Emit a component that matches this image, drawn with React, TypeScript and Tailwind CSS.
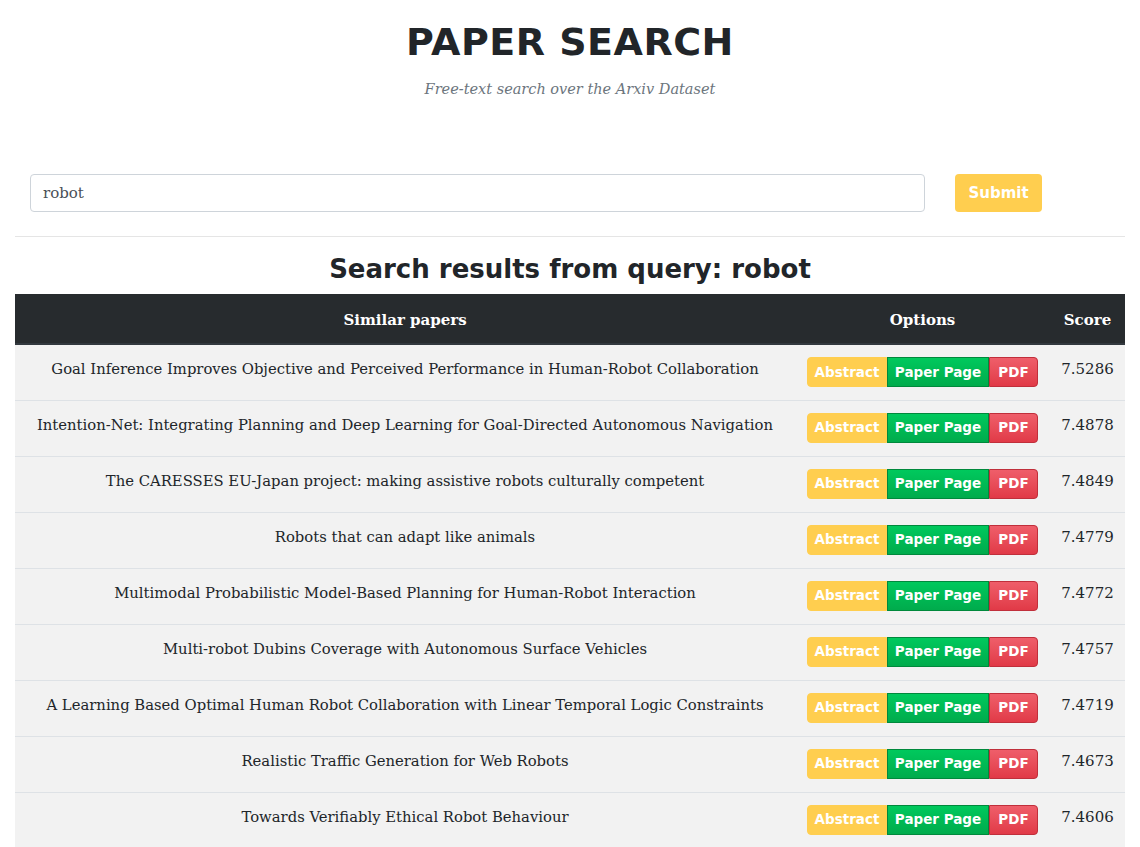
import React from "react";

const papers = [
  { title: "Goal Inference Improves Objective and Perceived Performance in Human-Robot Collaboration", score: "7.5286" },
  { title: "Intention-Net: Integrating Planning and Deep Learning for Goal-Directed Autonomous Navigation", score: "7.4878" },
  { title: "The CARESSES EU-Japan project: making assistive robots culturally competent", score: "7.4849" },
  { title: "Robots that can adapt like animals", score: "7.4779" },
  { title: "Multimodal Probabilistic Model-Based Planning for Human-Robot Interaction", score: "7.4772" },
  { title: "Multi-robot Dubins Coverage with Autonomous Surface Vehicles", score: "7.4757" },
  { title: "A Learning Based Optimal Human Robot Collaboration with Linear Temporal Logic Constraints", score: "7.4719" },
  { title: "Realistic Traffic Generation for Web Robots", score: "7.4673" },
  { title: "Towards Verifiably Ethical Robot Behaviour", score: "7.4606" },
];

const heading = "font-['DejaVu_Sans',sans-serif]";
const body = "font-['DejaVu_Serif',serif]";

const App: React.FC = () => {
  return (
    <div className={`min-h-screen bg-white text-[#212529] ${body}`}>
      <div className="w-[1110px] mx-auto">
        {/* header */}
        <div className="text-center">
          <h1 className={`${heading} font-bold text-[38px] leading-[48px] pt-[18px] text-[#212529] tracking-[0.5px]`}>
            PAPER SEARCH
          </h1>
          <p className="italic text-[14.5px] leading-6 mt-[11px] text-[#6c757d]">
            Free-text search over the Arxiv Dataset
          </p>
        </div>

        {/* search form */}
        <div className="flex items-center px-[15px] mt-[73px]">
          <input
            type="text"
            defaultValue="robot"
            className={`${body} w-[895px] h-[38px] border border-[#ced4da] rounded-[4px] px-[12px] text-[15px] text-[#495057] outline-none`}
          />
          <button className={`${heading} ml-[30px] h-[38px] w-[87px] rounded-[4px] bg-[#ffce4f] text-white font-bold text-[15px]`}>
            Submit
          </button>
        </div>

        <hr className="mt-[24px] border-t border-[#e5e5e5]" />

        {/* results */}
        <h2 className={`${heading} font-bold text-[26px] leading-[34px] text-center mt-[15px] text-[#212529]`}>
          Search results from query: robot
        </h2>

        <table className="w-full mt-[8px] border-collapse table-fixed">
          <thead>
            <tr className="bg-[#272b2e] text-white">
              <th className="w-[780px] h-[50px] pt-[3px] font-bold text-[15px] border-b-2 border-[#32383e]">Similar papers</th>
              <th className="w-[255px] pt-[3px] font-bold text-[15px] border-b-2 border-[#32383e]">Options</th>
              <th className="w-[75px] pt-[3px] font-bold text-[15px] border-b-2 border-[#32383e]">Score</th>
            </tr>
          </thead>
          <tbody>
            {papers.map((paper, index) => (
              <tr key={index} className="bg-[#f2f2f2] border-t border-[#dee2e6] align-top">
                <td className="h-[56px] px-[12px] pt-[12px] text-center text-[14.8px] leading-6 text-[#212529]">
                  {paper.title}
                </td>
                <td className="pt-[12px]">
                  <div className={`${heading} flex justify-center text-white font-bold text-[13.5px]`}>
                    <span className="h-[30px] w-[80px] flex items-center justify-center rounded-l-[4px] bg-[#ffce4f] border border-[#ffce4f]">
                      Abstract
                    </span>
                    <span className="h-[30px] w-[102px] flex items-center justify-center bg-gradient-to-b from-[#00c95d] to-[#00ab4c] border border-[#00893c]">
                      Paper Page
                    </span>
                    <span className="h-[30px] w-[49px] flex items-center justify-center rounded-r-[4px] bg-gradient-to-b from-[#ef5e6a] to-[#e13947] border border-[#c02f3b]">
                      PDF
                    </span>
                  </div>
                </td>
                <td className="pt-[12px] text-center text-[15px] leading-6 text-[#212529]">
                  {paper.score}
                </td>
              </tr>
            ))}
          </tbody>
        </table>
      </div>
    </div>
  );
};

export default App;
